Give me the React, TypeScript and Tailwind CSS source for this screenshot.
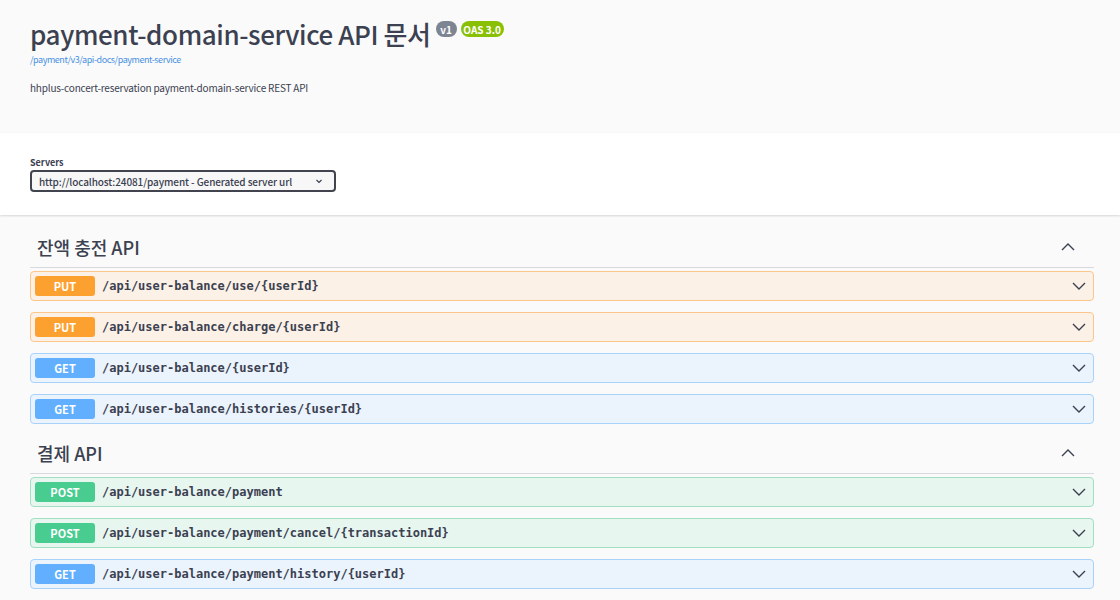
import React from "react";

const SANS = "font-['Noto_Sans_CJK_KR','Noto_Sans',sans-serif]";
const MONO = "font-['DejaVu_Sans_Mono',monospace]";

type Op = { method: "GET" | "PUT" | "POST"; path: string };

const styles: Record<Op["method"], { block: string; badge: string }> = {
  PUT: { block: "bg-[#fcf1e6] border-[#fcc68a]", badge: "bg-[#fca130]" },
  GET: { block: "bg-[#ebf3fc] border-[#a9d2fb]", badge: "bg-[#61affe]" },
  POST: { block: "bg-[#e8f6f0] border-[#9fe0c2]", badge: "bg-[#49cc90]" },
};

function ChevronDown() {
  return (
    <svg width="16" height="16" viewBox="0 0 16 16" className="text-[#3b4151]">
      <path d="M2 5 L8 11 L14 5" fill="none" stroke="currentColor" strokeWidth="1.4" />
    </svg>
  );
}

function ChevronUp() {
  return (
    <svg width="16" height="16" viewBox="0 0 16 16" className="text-[#3b4151]">
      <path d="M2 11 L8 5 L14 11" fill="none" stroke="currentColor" strokeWidth="1.4" />
    </svg>
  );
}

function OpBlock({ op }: { op: Op }) {
  const s = styles[op.method];
  return (
    <div className={`flex h-[30px] items-center rounded-[4px] border px-[4px] ${s.block}`}>
      <div
        className={`flex h-[20px] w-[60px] items-center justify-center rounded-[3px] text-[11px] font-bold text-white ${SANS} ${s.badge}`}
      >
        {op.method}
      </div>
      <div className={`ml-[7px] flex-1 text-[12px] font-bold text-[#3b4151] ${MONO}`}>{op.path}</div>
      <div className="mr-[2px] flex items-center">
        <ChevronDown />
      </div>
    </div>
  );
}

function Section({ title, ops }: { title: string; ops: Op[] }) {
  return (
    <div className="mb-[12px]">
      <div className="flex h-[38px] items-center border-b border-[#d8d9dc] pb-[3px] pl-[7px] pr-[18px]">
        <span className={`flex-1 text-[18px] font-medium text-[#3b4151] ${SANS}`}>{title}</span>
        <ChevronUp />
      </div>
      <div className="mt-[3px] flex flex-col gap-[11px]">
        {ops.map((op) => (
          <OpBlock key={op.path} op={op} />
        ))}
      </div>
    </div>
  );
}

export default function App() {
  return (
    <div className={`min-h-[600px] w-full bg-[#fafafa] ${SANS}`}>
      <div className="h-[133px] px-[30px] pt-[14px]">
        <div className="flex items-start">
          <h2 className="text-[26px] font-medium leading-[40px] tracking-[-0.4px] text-[#3b4151]">
            payment-domain-service API 문서
          </h2>
          <span className="ml-[5px] mt-[7px] flex h-[16px] w-[21px] items-center justify-center rounded-full bg-[#7d8492] text-[10px] font-bold text-white">
            v1
          </span>
          <span className="ml-[4px] mt-[7px] flex h-[16px] w-[43px] items-center justify-center rounded-full bg-[#89bf04] text-[10px] font-bold text-white">
            OAS 3.0
          </span>
        </div>
        <div className="text-[9px] leading-[12px] tracking-[-0.45px] text-[#4990e2]">/payment/v3/api-docs/payment-service</div>
        <div className="mt-[15px] text-[10px] leading-[14px] tracking-[-0.2px] text-[#3b4151]">
          hhplus-concert-reservation payment-domain-service REST API
        </div>
      </div>
      <div className="h-[82px] bg-white px-[30px] pt-[24px] shadow-[0_1px_2px_0_rgba(0,0,0,0.15)]">
        <div className="text-[9px] font-bold leading-[12px] text-[#3b4151]">Servers</div>
        <div className="mt-[1px] flex h-[22px] w-[306px] items-center justify-between rounded-[4px] border-2 border-[#41444e] bg-[#f7f7f7] pl-[7px] pr-[10px]">
          <span className="whitespace-nowrap text-[10px] font-medium tracking-[-0.1px] text-[#3b4151]">
            http://localhost:24081/payment - Generated server url
          </span>
          <svg width="10" height="10" viewBox="0 0 20 20">
            <path d="M5 8 L10 13 L15 8" fill="none" stroke="#3b4151" strokeWidth="2.4" />
          </svg>
        </div>
      </div>
      <div className="pl-[30px] pr-[26px] pt-[15px]">
        <Section
          title="잔액 충전 API"
          ops={[
            { method: "PUT", path: "/api/user-balance/use/{userId}" },
            { method: "PUT", path: "/api/user-balance/charge/{userId}" },
            { method: "GET", path: "/api/user-balance/{userId}" },
            { method: "GET", path: "/api/user-balance/histories/{userId}" },
          ]}
        />
        <Section
          title="결제 API"
          ops={[
            { method: "POST", path: "/api/user-balance/payment" },
            { method: "POST", path: "/api/user-balance/payment/cancel/{transactionId}" },
            { method: "GET", path: "/api/user-balance/payment/history/{userId}" },
          ]}
        />
      </div>
    </div>
  );
}
